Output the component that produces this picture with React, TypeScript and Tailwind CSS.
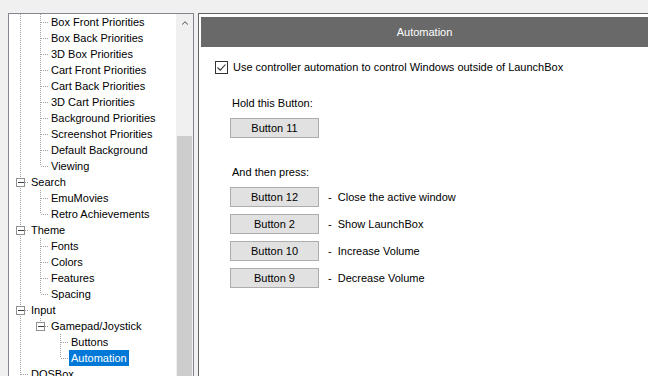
import { ChevronUp } from "lucide-react";

type Row = {
  label: string;
  level: number;
  guides: boolean[]; // ancestor lines that continue through this row
  last?: boolean;
  expander?: boolean;
  selected?: boolean;
};

const ROWS: Row[] = [
  { label: "Box Front Priorities", level: 1, guides: [true] },
  { label: "Box Back Priorities", level: 1, guides: [true] },
  { label: "3D Box Priorities", level: 1, guides: [true] },
  { label: "Cart Front Priorities", level: 1, guides: [true] },
  { label: "Cart Back Priorities", level: 1, guides: [true] },
  { label: "3D Cart Priorities", level: 1, guides: [true] },
  { label: "Background Priorities", level: 1, guides: [true] },
  { label: "Screenshot Priorities", level: 1, guides: [true] },
  { label: "Default Background", level: 1, guides: [true] },
  { label: "Viewing", level: 1, guides: [true], last: true },
  { label: "Search", level: 0, guides: [], expander: true },
  { label: "EmuMovies", level: 1, guides: [true] },
  { label: "Retro Achievements", level: 1, guides: [true], last: true },
  { label: "Theme", level: 0, guides: [], expander: true },
  { label: "Fonts", level: 1, guides: [true] },
  { label: "Colors", level: 1, guides: [true] },
  { label: "Features", level: 1, guides: [true] },
  { label: "Spacing", level: 1, guides: [true], last: true },
  { label: "Input", level: 0, guides: [], expander: true },
  { label: "Gamepad/Joystick", level: 1, guides: [true], expander: true, last: true },
  { label: "Buttons", level: 2, guides: [true, false] },
  { label: "Automation", level: 2, guides: [true, false], last: true, selected: true },
  { label: "DOSBox", level: 0, guides: [] },
];

const PAIRS = [
  { button: "Button 12", action: "Close the active window" },
  { button: "Button 2", action: "Show LaunchBox" },
  { button: "Button 10", action: "Increase Volume" },
  { button: "Button 9", action: "Decrease Volume" },
];

function Guide({ on }: { on: boolean }) {
  return (
    <svg width="20" height="16" className="shrink-0" shapeRendering="crispEdges">
      {on && <line x1="11.5" y1="0" x2="11.5" y2="16" stroke="#a0a0a0" strokeDasharray="1 1" />}
    </svg>
  );
}

function Connector({ last, expander }: { last?: boolean; expander?: boolean }) {
  return (
    <svg width="20" height="16" className="shrink-0" shapeRendering="crispEdges">
      <line x1="11.5" y1="0" x2="11.5" y2={last ? 8 : 16} stroke="#a0a0a0" strokeDasharray="1 1" />
      <line x1="12" y1="8.5" x2="20" y2="8.5" stroke="#a0a0a0" strokeDasharray="1 1" />
      {expander && (
        <>
          <rect x="7.5" y="4.5" width="8" height="8" fill="#fff" stroke="#919191" />
          <line x1="9" y1="8.5" x2="15" y2="8.5" stroke="#404040" />
        </>
      )}
    </svg>
  );
}

function ActionButton({ children }: { children: string }) {
  return (
    <div className="w-[89px] h-[20px] border border-[#adadad] bg-[#e1e1e1] flex items-center justify-center text-black">
      {children}
    </div>
  );
}

export default function App() {
  return (
    <div className="w-[648px] h-[376px] overflow-hidden bg-[#f0f0f0] pt-[13px] pl-[8px] flex gap-[4px] font-['Liberation_Sans',Arial,sans-serif] text-[11px] text-black">
      {/* tree panel */}
      <div className="w-[186px] h-[370px] border-l border-t border-r border-[#828790] bg-white flex">
        <div className="flex-1 flex flex-col overflow-hidden">
          {ROWS.map((r) => (
            <div key={r.label} className="h-4 flex items-center shrink-0 whitespace-nowrap">
              {r.guides.map((g, i) => (
                <Guide key={i} on={g} />
              ))}
              <Connector last={r.last} expander={r.expander} />
              <span
                className={
                  r.selected
                    ? "h-4 leading-4 px-[2px] bg-[#0078d7] text-white"
                    : "h-4 leading-4 px-[2px]"
                }
              >
                {r.label}
              </span>
            </div>
          ))}
        </div>
        <div className="w-[17px] bg-[#f0f0f0] flex flex-col items-center">
          <div className="h-[17px] w-full flex items-center justify-center">
            <ChevronUp className="w-[10px] h-[10px] text-[#606060]" strokeWidth={2.5} />
          </div>
          <div className="h-[105px]" />
          <div className="flex-1 w-[15px] bg-[#cdcdcd]" />
        </div>
      </div>

      {/* settings panel */}
      <div className="flex-1 h-[370px] border-l border-t border-[#646464] bg-white pt-[3px] pl-[2px]">
        <div className="h-[30px] bg-[#696969] text-white flex items-center justify-center">
          Automation
        </div>
        <div className="pl-[14px] pt-[13px]">
          <label className="flex items-center gap-[5px] h-[15px]">
            <span className="w-[13px] h-[13px] border border-[#333] bg-white flex items-center justify-center">
              <svg width="11" height="11" viewBox="0 0 11 11">
                <path d="M1.5 5.5 L4.2 8.2 L9.5 2.5" fill="none" stroke="#333" strokeWidth="1.1" />
              </svg>
            </span>
            <span>Use controller automation to control Windows outside of LaunchBox</span>
          </label>
          <div className="pl-[17px] pt-[20px]">
            <div className="h-[16px] leading-4">Hold this Button:</div>
            <div className="pt-[7px] -ml-[2px]">
              <ActionButton>Button 11</ActionButton>
            </div>
            <div className="h-[16px] leading-4 mt-[26px]">And then press:</div>
            <div className="flex flex-col gap-[7px] pt-[7px] -ml-[2px]">
              {PAIRS.map((p) => (
                <div key={p.button} className="flex items-center gap-[9px]">
                  <ActionButton>{p.button}</ActionButton>
                  <span>-&nbsp;&nbsp;{p.action}</span>
                </div>
              ))}
            </div>
          </div>
        </div>
      </div>
    </div>
  );
}
